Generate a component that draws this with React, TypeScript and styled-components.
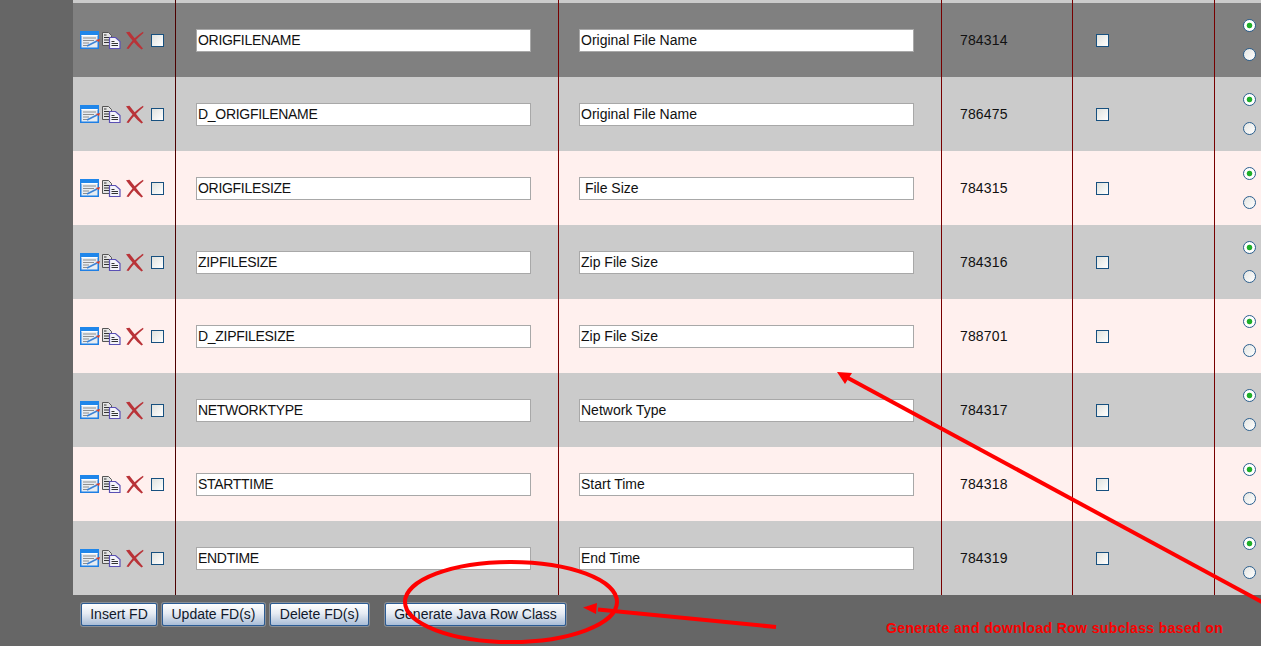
import React from "react";
import styled, { createGlobalStyle } from "styled-components";

const Global = createGlobalStyle`
  html, body { margin: 0; padding: 0; height: 100%; background: #666666; overflow: hidden; }
  body { font-family: "Liberation Sans", Arial, sans-serif; font-size: 14px; color: #111; }
`;

const Page = styled.div`
  position: relative;
  width: 1261px;
  height: 646px;
  overflow: hidden;
  background: #666666;
`;

const Table = styled.div`
  margin-left: 73px;
  display: flex;
  flex-direction: column;
`;

const Row = styled.div<{ $bg: string; $h: number }>`
  display: grid;
  grid-template-columns: 102px 383px 383px 131px 142px 1fr;
  height: ${(p) => p.$h}px;
  background: ${(p) => p.$bg};
`;

const Cell = styled.div<{ $pad: number; $line?: string }>`
  display: flex;
  align-items: center;
  box-sizing: border-box;
  padding-left: ${(p) => p.$pad}px;
  border-left: ${(p) => (p.$line ? `1px solid ${p.$line}` : "none")};
`;

const Actions = styled(Cell)`
  gap: 2px;
`;

const IdCell = styled(Cell)`
  letter-spacing: 0.15px;
`;

const Tick = styled.input.attrs({ type: "checkbox" })<{ $left?: number }>`
  appearance: none;
  margin: 0 0 0 ${(p) => p.$left ?? 0}px;
  width: 13px;
  height: 13px;
  box-sizing: border-box;
  border: 1.4px solid #17507f;
  background: linear-gradient(135deg, #e0e2de, #ffffff);
`;

const FieldInput = styled.input<{ $tight?: boolean }>`
  width: 335px;
  height: 23px;
  box-sizing: border-box;
  margin: 0;
  padding: 0 1px;
  border: 1px solid #a8a8a8;
  background: #fff;
  color: #111;
  font: 14px "Liberation Sans", Arial, sans-serif;
  letter-spacing: ${(p) => (p.$tight ? "-0.3px" : "0")};
  outline: none;
`;

const RadioStack = styled(Cell)`
  flex-direction: column;
  align-items: flex-start;
  justify-content: center;
  gap: 16px;
`;

const Radio = styled.input.attrs({ type: "radio" })<{ $on?: boolean }>`
  appearance: none;
  margin: 0;
  width: 13px;
  height: 13px;
  box-sizing: border-box;
  border-radius: 50%;
  border: 1.4px solid #2b5f8e;
  background: ${(p) =>
    p.$on
      ? "radial-gradient(circle, #1fae2a 0 2.4px, #ffffff 3.2px)"
      : "linear-gradient(135deg, #e4e5e2, #ffffff)"};
`;

const Footer = styled.div`
  display: flex;
  align-items: center;
  height: 51px;
  padding: 0 0 13px 8px;
  box-sizing: border-box;
`;

const Btn = styled.button<{ $left?: number; $w: number }>`
  width: ${(p) => p.$w}px;
  height: 23px;
  margin: 0 0 0 ${(p) => p.$left ?? 5}px;
  padding: 0;
  box-sizing: border-box;
  border: 1px solid #2c5c94;
  border-radius: 2px;
  box-shadow: 0 0 0 1px #8a8f96;
  background: linear-gradient(to bottom, #ffffff 0%, #e6ebf3 45%, #a9bdd7 100%);
  color: #10182a;
  font: 14px "Liberation Sans", Arial, sans-serif;
`;

const Overlay = styled.svg`
  position: absolute;
  left: 0;
  top: 0;
  pointer-events: none;
`;

const Note = styled.div`
  position: absolute;
  left: 886px;
  top: 620px;
  color: #fb0000;
  font: bold 14px "Liberation Sans", Arial, sans-serif;
  letter-spacing: 0.37px;
  white-space: nowrap;
`;

const DeleteSvg = styled.svg`
  margin-left: 2px;
`;

const EditIcon = () => (
  <svg width="20" height="18" viewBox="0 0 20 18">
    <rect x="0.75" y="0.75" width="17.5" height="16.5" fill="#e8edf2" stroke="#1f7fe4" strokeWidth="1.5" />
    <rect x="0" y="0" width="19" height="4" fill="#1f86ea" />
    <rect x="1.5" y="4" width="16" height="1" fill="#fff" />
    <path d="M3 7h13M3 9.5h11M3 12h6M3 14.5h5" stroke="#8f8f8f" strokeWidth="1" />
    <path d="M7 15 L17 10" stroke="#3f84d6" strokeWidth="1.8" />
    <path d="M15.5 9 L20 8 L19 11 Z" fill="#d8402c" />
  </svg>
);

const CopyIcon = () => (
  <svg width="19" height="17" viewBox="0 0 19 17">
    <path d="M0.5 0.5h6l3 3v10h-9z" fill="#e4e4e4" stroke="#555" />
    <path d="M2 5.5h5M2 8h5M2 10.5h5M2 3h2.5" stroke="#333" />
    <path d="M7.5 5.5h6l4.5 4v7H7.5z" fill="#f4f4fa" stroke="#5a50b4" strokeWidth="1.2" />
    <path d="M9.5 9.5h3M9.5 11.5h6.5M9.5 13.5h6.5" stroke="#333" />
  </svg>
);

const DeleteIcon = () => (
  <DeleteSvg width="19" height="19" viewBox="0 0 19 19">
    <path d="M1 1.2 L4.5 0.8 C8 5 12 10.5 18 17.5 L16.5 18.5 C11 14 6 8 1 1.2 Z" fill="#b93338" />
    <path d="M18 0.8 C12 4.5 6 10.5 1.5 17.5 L3.5 18 C8 11.5 13 6.5 18.5 2 Z" fill="#b93338" />
  </DeleteSvg>
);

const dark = "#4d0000";
const line = "#770000";

const rows = [
  ["ORIGFILENAME", "Original File Name", "784314", "#808080"],
  ["D_ORIGFILENAME", "Original File Name", "786475", "#cbcbcb"],
  ["ORIGFILESIZE", " File Size", "784315", "#fff0ee"],
  ["ZIPFILESIZE", "Zip File Size", "784316", "#cbcbcb"],
  ["D_ZIPFILESIZE", "Zip File Size", "788701", "#fff0ee"],
  ["NETWORKTYPE", "Network Type", "784317", "#cbcbcb"],
  ["STARTTIME", "Start Time", "784318", "#fff0ee"],
  ["ENDTIME", "End Time", "784319", "#cbcbcb"],
];

export default function App() {
  return (
    <Page>
      <Global />
      <Table>
        <Row $bg="#cbcbcb" $h={3}>
          <Cell $pad={0} />
          <Cell $pad={0} $line={dark} />
          <Cell $pad={0} $line={line} />
          <Cell $pad={0} $line={line} />
          <Cell $pad={0} $line={line} />
          <Cell $pad={0} $line={line} />
        </Row>
        {rows.map(([name, label, id, bg], i) => (
          <Row key={name} $bg={bg} $h={74}>
            <Actions $pad={7}>
              <EditIcon />
              <CopyIcon />
              <DeleteIcon />
              <Tick $left={5} />
            </Actions>
            <Cell $pad={20} $line={dark}>
              <FieldInput $tight defaultValue={name} />
            </Cell>
            <Cell $pad={20} $line={line}>
              <FieldInput defaultValue={label} />
            </Cell>
            <IdCell $pad={18} $line={line}>{id}</IdCell>
            <Cell $pad={23} $line={line}>
              <Tick />
            </Cell>
            <RadioStack $pad={28} $line={line}>
              <Radio name={`r${i}`} $on />
              <Radio name={`r${i}`} />
            </RadioStack>
          </Row>
        ))}
        <Footer>
          <Btn $left={0} $w={76}>Insert FD</Btn>
          <Btn $w={103}>Update FD(s)</Btn>
          <Btn $w={99}>Delete FD(s)</Btn>
          <Btn $left={16} $w={181}>Generate Java Row Class</Btn>
        </Footer>
      </Table>
      <Overlay width="1261" height="646" viewBox="0 0 1261 646">
        <ellipse cx="511" cy="602" rx="106" ry="40" fill="none" stroke="#ff0000" strokeWidth="4" />
        <path d="M776 627 L598 609.5" stroke="#ff0000" strokeWidth="4" fill="none" />
        <path d="M583 607.5 L597 603 L596 614 Z" fill="#ff0000" />
        <path d="M1262 602 L848 378" stroke="#ff0000" strokeWidth="4" fill="none" />
        <path d="M837 372 L852 373 L845 384 Z" fill="#ff0000" />
      </Overlay>
      <Note>Generate and download Row subclass based on</Note>
    </Page>
  );
}
